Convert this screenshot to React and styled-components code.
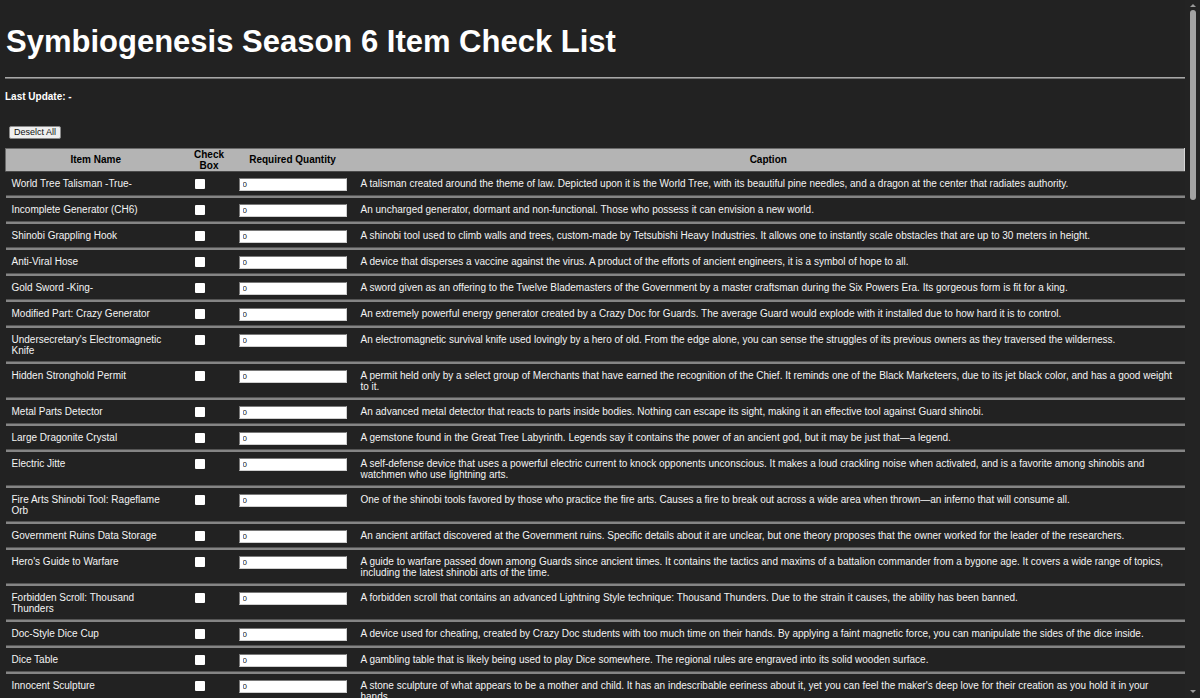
import React, { useState } from "react";
import styled, { createGlobalStyle } from "styled-components";

const GlobalStyle = createGlobalStyle`
  html {
    color-scheme: dark;
    background: #222222;
  }
  body {
    margin: 0;
    padding: 0 15px 0 5px;
    background: #222222;
    color: #ffffff;
    font-family: "Liberation Sans", Arial, sans-serif;
  }
`;

const Title = styled.h1`
  margin: 23px 0 17px 1px;
  font-size: 31px;
  line-height: 37px;
  font-weight: bold;
  color: #ffffff;
`;

const Rule = styled.hr`
  margin: 0;
  height: 0;
  border: 0;
  border-top: 1px solid #a8a8a8;
  border-bottom: 1px solid #6e6e6e;
`;

const LastUpdate = styled.p`
  margin: 12px 0 0;
  font-size: 10px;
  line-height: 11.5px;
  font-weight: bold;
`;

const Toolbar = styled.div`
  margin: 23px 0 9px 4px;
  display: flex;
`;

const Button = styled.button`
  appearance: none;
  height: 13px;
  padding: 0 4px;
  background: #efefef;
  color: #111;
  border: 1px solid #8a8a8a;
  border-radius: 2px;
  font-family: "Liberation Sans", Arial, sans-serif;
  font-size: 9px;
  line-height: 11px;
  cursor: pointer;
`;

const Table = styled.table`
  width: 100%;
  table-layout: fixed;
  border-collapse: collapse;
  font-size: 10px;
`;

const HeadCell = styled.th`
  background: #b4b4b4;
  color: #000;
  font-weight: bold;
  text-align: center;
  line-height: 11px;
  padding: 0 6px;
  border-top: 1px solid #6a6a6a;
  border-bottom: 1px solid #4a4a4a;
  &:first-child {
    border-left: 1px solid #6a6a6a;
  }
  &:last-child {
    border-right: 1px solid #d6d6d6;
  }
`;

const Cell = styled.td`
  vertical-align: top;
  padding: 6px ${(p) => p.$right || 6}px 5px ${(p) => p.$left || 6}px;
  line-height: 11.5px;
  color: #f4f4f4;
  border-bottom: 2px solid #858585;
  box-shadow: inset 0 -1px 0 #555555;
`;

const Check = styled.input.attrs({ type: "checkbox" })`
  appearance: none;
  display: block;
  width: 10px;
  height: 10px;
  margin: 1px 0 0 3px;
  background: #ffffff;
  border: 0;
  border-radius: 1px;
  cursor: pointer;
  &:checked {
    background: #3b82f6;
  }
`;

const Qty = styled.input`
  appearance: none;
  display: block;
  box-sizing: border-box;
  width: 108px;
  height: 13px;
  margin: 0;
  padding: 0 3px;
  background: #ffffff;
  color: #111;
  border: 1px solid #7a7a7a;
  border-right-color: #cfcfcf;
  border-bottom-color: #cfcfcf;
  font-family: "Liberation Sans", Arial, sans-serif;
  font-size: 8px;
  line-height: 11px;
`;

/* the window's dark scrollbar, drawn over the right edge */
const ScrollRail = styled.div`
  position: fixed;
  top: 0;
  right: 0;
  bottom: 0;
  width: 15px;
  background: #232323;
  display: flex;
  flex-direction: column;
  align-items: center;
`;

const Arrow = styled.div`
  width: 0;
  height: 0;
  margin: ${(p) => (p.$down ? "auto 0 5px" : "4px 0 3px")};
  border-left: 3px solid transparent;
  border-right: 3px solid transparent;
  ${(p) => (p.$down ? "border-top" : "border-bottom")}: 3px solid #9a9a9a;
`;

const Thumb = styled.div`
  width: 6px;
  height: 190px;
  border-radius: 3px;
  background: #a3a3a3;
`;

const items = [
  ["World Tree Talisman -True-", "A talisman created around the theme of law. Depicted upon it is the World Tree, with its beautiful pine needles, and a dragon at the center that radiates authority."],
  ["Incomplete Generator (CH6)", "An uncharged generator, dormant and non-functional. Those who possess it can envision a new world."],
  ["Shinobi Grappling Hook", "A shinobi tool used to climb walls and trees, custom-made by Tetsubishi Heavy Industries. It allows one to instantly scale obstacles that are up to 30 meters in height."],
  ["Anti-Viral Hose", "A device that disperses a vaccine against the virus. A product of the efforts of ancient engineers, it is a symbol of hope to all."],
  ["Gold Sword -King-", "A sword given as an offering to the Twelve Blademasters of the Government by a master craftsman during the Six Powers Era. Its gorgeous form is fit for a king."],
  ["Modified Part: Crazy Generator", "An extremely powerful energy generator created by a Crazy Doc for Guards. The average Guard would explode with it installed due to how hard it is to control."],
  ["Undersecretary's Electromagnetic Knife", "An electromagnetic survival knife used lovingly by a hero of old. From the edge alone, you can sense the struggles of its previous owners as they traversed the wilderness."],
  ["Hidden Stronghold Permit", "A permit held only by a select group of Merchants that have earned the recognition of the Chief. It reminds one of the Black Marketeers, due to its jet black color, and has a good weight to it."],
  ["Metal Parts Detector", "An advanced metal detector that reacts to parts inside bodies. Nothing can escape its sight, making it an effective tool against Guard shinobi."],
  ["Large Dragonite Crystal", "A gemstone found in the Great Tree Labyrinth. Legends say it contains the power of an ancient god, but it may be just that\u2014a legend."],
  ["Electric Jitte", "A self-defense device that uses a powerful electric current to knock opponents unconscious. It makes a loud crackling noise when activated, and is a favorite among shinobis and watchmen who use lightning arts."],
  ["Fire Arts Shinobi Tool: Rageflame Orb", "One of the shinobi tools favored by those who practice the fire arts. Causes a fire to break out across a wide area when thrown\u2014an inferno that will consume all."],
  ["Government Ruins Data Storage", "An ancient artifact discovered at the Government ruins. Specific details about it are unclear, but one theory proposes that the owner worked for the leader of the researchers."],
  ["Hero's Guide to Warfare", "A guide to warfare passed down among Guards since ancient times. It contains the tactics and maxims of a battalion commander from a bygone age. It covers a wide range of topics, including the latest shinobi arts of the time."],
  ["Forbidden Scroll: Thousand Thunders", "A forbidden scroll that contains an advanced Lightning Style technique: Thousand Thunders. Due to the strain it causes, the ability has been banned."],
  ["Doc-Style Dice Cup", "A device used for cheating, created by Crazy Doc students with too much time on their hands. By applying a faint magnetic force, you can manipulate the sides of the dice inside."],
  ["Dice Table", "A gambling table that is likely being used to play Dice somewhere. The regional rules are engraved into its solid wooden surface."],
  ["Innocent Sculpture", "A stone sculpture of what appears to be a mother and child. It has an indescribable eeriness about it, yet you can feel the maker's deep love for their creation as you hold it in your hands."],
];

export default function App() {
  const [checked, setChecked] = useState({});

  return (
    <>
      <GlobalStyle />
      <Title>Symbiogenesis Season 6 Item Check List</Title>
      <Rule />
      <LastUpdate>Last Update: -</LastUpdate>
      <Toolbar>
        <Button onClick={() => setChecked({})}>Deselct All</Button>
      </Toolbar>
      <Table>
        <colgroup>
          <col style={{ width: 180 }} />
          <col style={{ width: 47 }} />
          <col style={{ width: 120 }} />
          <col />
        </colgroup>
        <thead>
          <tr>
            <HeadCell>Item Name</HeadCell>
            <HeadCell>Check<br />Box</HeadCell>
            <HeadCell>Required Quantity</HeadCell>
            <HeadCell>Caption</HeadCell>
          </tr>
        </thead>
        <tbody>
          {items.map(([name, caption]) => (
            <tr key={name}>
              <Cell $right={14}>{name}</Cell>
              <Cell>
                <Check
                  checked={!!checked[name]}
                  onChange={(e) => setChecked({ ...checked, [name]: e.target.checked })}
                />
              </Cell>
              <Cell>
                <Qty defaultValue="0" />
              </Cell>
              <Cell $left={8} $right={8}>{caption}</Cell>
            </tr>
          ))}
        </tbody>
      </Table>
      <ScrollRail>
        <Arrow />
        <Thumb />
        <Arrow $down />
      </ScrollRail>
    </>
  );
}
